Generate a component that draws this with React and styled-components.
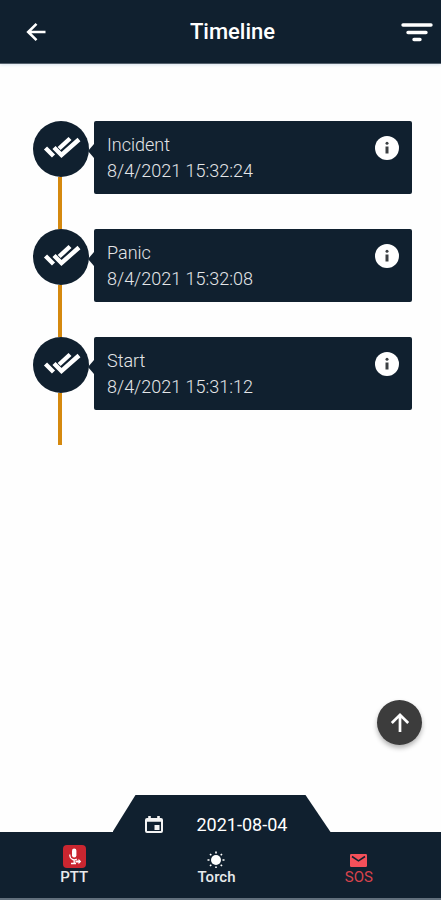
import React from "react";
import styled, { createGlobalStyle } from "styled-components";

const navy = "#10202f";

const GlobalStyle = createGlobalStyle`
  *, *::before, *::after { box-sizing: border-box; }
  body { margin: 0; background: #fefefe; font-family: Roboto, "Liberation Sans", sans-serif; }
  button { font: inherit; color: inherit; background: none; border: 0; padding: 0; cursor: pointer; }
  svg { display: block; }
  h1, h2, p, ol { margin: 0; padding: 0; }
`;

const Screen = styled.div`
  position: relative;
  display: flex;
  flex-direction: column;
  min-height: 100vh;
`;

const Header = styled.header`
  display: grid;
  grid-template-columns: 72px 1fr 48px;
  align-items: center;
  height: 64px;
  background: ${navy};
  color: #fff;
  border-bottom: 1px solid #56626e;
  box-shadow: 0 1px 3px #dbe4ee;
`;

const HeaderButton = styled.button`
  display: flex;
  align-items: center;
  justify-content: center;
  height: 48px;
`;

const Title = styled.h1`
  text-align: center;
  font-size: 22px;
  line-height: 28px;
  font-weight: 500;
`;

const Main = styled.main`
  flex: 1;
  padding: 57px 29px 0 33px;
`;

const Timeline = styled.ol`
  list-style: none;
`;

const Entry = styled.li`
  display: grid;
  grid-template-columns: 56px 1fr;
  column-gap: 5px;
  align-items: start;
  min-height: 108px;
`;

const Rail = styled.div`
  display: flex;
  flex-direction: column;
  align-items: center;
  align-self: stretch;
`;

const Marker = styled.div`
  width: 56px;
  height: 56px;
  border-radius: 50%;
  background: ${navy};
`;

const Line = styled.div`
  flex: 1;
  width: 4px;
  margin-right: 2px;
  background: #d5890f;
`;

const Card = styled.article`
  position: relative;
  display: flex;
  justify-content: space-between;
  align-items: flex-start;
  padding: 11px 13px 10px;
  border-radius: 2px;
  background: ${navy};
  color: #e4e6e8;

  &::before {
    content: "";
    position: absolute;
    top: 23px;
    left: -6px;
    border: 7px solid transparent;
    border-left-width: 0;
    border-right: 6px solid ${navy};
  }
`;

const CardTitle = styled.h2`
  font-size: 18px;
  line-height: 26px;
  font-weight: 300;
`;

const CardTime = styled.p`
  font-size: 18px;
  line-height: 26px;
  font-weight: 300;
`;

const InfoButton = styled.button`
  margin-top: 4px;
  height: 24px;
`;

const ScrollTop = styled.button`
  position: absolute;
  right: 19px;
  bottom: 155px;
  display: flex;
  align-items: center;
  justify-content: center;
  width: 45px;
  height: 45px;
  border-radius: 50%;
  background: #3c3c3c;
  box-shadow: 0 3px 5px rgba(0, 0, 0, 0.3);
`;

const Footer = styled.footer`
  display: flex;
  flex-direction: column;
`;

const DateButton = styled.button`
  display: flex;
  align-items: center;
  align-self: center;
  gap: 34px;
  width: 218px;
  height: 41px;
  padding: 19px 0 0 32px;
  margin-left: 2px;
  margin-bottom: -4px;
  background: ${navy};
  color: #fff;
  clip-path: polygon(23px 0, 193px 0, 218px 37px, 218px 41px, 0 41px, 0 37px);
`;

const DateText = styled.span`
  font-size: 18px;
  line-height: 20px;
`;

const Nav = styled.nav`
  display: grid;
  grid-template-columns: repeat(3, 1fr);
  height: 68px;
  padding: 12px 11px 0 3px;
  background: ${navy};
  border-bottom: 2px solid #62707d;
`;

const NavButton = styled.button`
  display: flex;
  flex-direction: column;
  align-items: center;
  height: 42px;
  color: ${(p) => p.$color};
`;

const NavIcon = styled.span`
  display: flex;
  align-items: ${(p) => (p.$low ? "flex-end" : "center")};
  justify-content: center;
  height: 24px;
`;

const NavLabel = styled.span`
  font-size: 15px;
  line-height: 18px;
  font-weight: ${(p) => (p.$regular ? 400 : 500)};
`;

const BackIcon = () => (
  <svg width="20" height="20" viewBox="0 0 20 20" fill="none" stroke="#fff" strokeWidth="2.6">
    <path d="M19.5 10H2.5M10.5 1.8 2.2 10l8.3 8.2" />
  </svg>
);

const FilterIcon = () => (
  <svg width="34" height="22" viewBox="0 0 34 22" fill="none" stroke="#fff" strokeWidth="3.4" strokeLinecap="round">
    <path d="M3 4h28M8 11.5h18M14 18.5h6" />
  </svg>
);

const DoubleCheckIcon = () => (
  <svg width="56" height="56" viewBox="0 0 56 56" fill="none" strokeWidth="4.4">
    <path d="M12.5 27l8 8M25 28.5l12-11" stroke="#fff" />
    <path d="M21 26.5l7.5 7.5 17.5-15.5" stroke={navy} strokeWidth="6" />
    <path d="M21 26.5l7.5 7.5 17.5-15.5" stroke="#fff" />
  </svg>
);

const InfoIcon = () => (
  <svg width="24" height="24" viewBox="0 0 24 24">
    <circle cx="12" cy="12" r="12" fill="#fff" />
    <circle cx="12" cy="7.3" r="1.5" fill="#3c4043" />
    <path d="M12 10.5v7" stroke="#3c4043" strokeWidth="3" />
  </svg>
);

const UpIcon = () => (
  <svg width="22" height="22" viewBox="0 0 22 22" fill="none" stroke="#fff" strokeWidth="2.7">
    <path d="M11 20V3M2.8 11 11 2.8l8.2 8.2" />
  </svg>
);

const CalendarIcon = () => (
  <svg width="18" height="18" viewBox="0 0 18 18" fill="none" stroke="#f4f4f4" strokeWidth="2">
    <rect x="1" y="3" width="16" height="13" rx="1" />
    <path d="M1 4.5h16M4.5 0v4M13.5 0v4" strokeWidth="2.6" />
    <path d="M9.5 9h5v5h-5z" fill="#f4f4f4" stroke="none" />
  </svg>
);

const MicIcon = () => (
  <svg width="23" height="23" viewBox="0 0 23 23" fill="none" stroke="#fff">
    <rect width="23" height="23" rx="4" fill="#ca2630" stroke="none" />
    <rect x="9" y="3.5" width="4.4" height="9" rx="2.2" fill="#fff" stroke="none" />
    <path d="M6.8 9.5v1.3a4.4 4.4 0 0 0 7 3.2M11.2 15v3M8 18.5h5" strokeWidth="1.3" />
    <path d="M12.5 15.5h3v-1.7l2.7 2.7-2.7 2.7v-1.6h-3z" fill="#fff" stroke="none" />
  </svg>
);

const SunIcon = () => (
  <svg width="18" height="18" viewBox="0 0 18 18" fill="none" stroke="#fff">
    <circle cx="9" cy="10" r="5" fill="#fff" stroke="none" />
    <path
      d="M9 1.5v2M9 16.5v1.5M.5 10h2M15.5 10h2M3 4l1.3 1.3M13.7 14.7 15 16M3 16l1.3-1.3M13.7 5.3 15 4"
      strokeWidth="1.6"
    />
  </svg>
);

const MailIcon = () => (
  <svg width="17" height="16" viewBox="0 0 17 16" fill="none">
    <rect width="17" height="13" y="2" rx="1.2" fill="#f4505a" />
    <path d="M2 4.5l6.5 4.3L15 4.5" stroke={navy} strokeWidth="1.5" />
  </svg>
);

const entries = [
  { title: "Incident", time: "8/4/2021 15:32:24" },
  { title: "Panic", time: "8/4/2021 15:32:08" },
  { title: "Start", time: "8/4/2021 15:31:12" },
];

export default function App() {
  return (
    <>
      <GlobalStyle />
      <Screen>
        <Header>
          <HeaderButton aria-label="Back"><BackIcon /></HeaderButton>
          <Title>Timeline</Title>
          <HeaderButton aria-label="Filter"><FilterIcon /></HeaderButton>
        </Header>
        <Main>
          <Timeline>
            {entries.map((entry) => (
              <Entry key={entry.title}>
                <Rail>
                  <Marker><DoubleCheckIcon /></Marker>
                  <Line />
                </Rail>
                <Card>
                  <div>
                    <CardTitle>{entry.title}</CardTitle>
                    <CardTime>{entry.time}</CardTime>
                  </div>
                  <InfoButton aria-label={`About ${entry.title}`}><InfoIcon /></InfoButton>
                </Card>
              </Entry>
            ))}
          </Timeline>
        </Main>
        <ScrollTop aria-label="Scroll to top"><UpIcon /></ScrollTop>
        <Footer>
          <DateButton>
            <CalendarIcon />
            <DateText>2021-08-04</DateText>
          </DateButton>
          <Nav>
            <NavButton $color="#e8eaec">
              <NavIcon><MicIcon /></NavIcon>
              <NavLabel>PTT</NavLabel>
            </NavButton>
            <NavButton $color="#e8eaec">
              <NavIcon $low><SunIcon /></NavIcon>
              <NavLabel>Torch</NavLabel>
            </NavButton>
            <NavButton $color="#d8434c">
              <NavIcon $low><MailIcon /></NavIcon>
              <NavLabel $regular>SOS</NavLabel>
            </NavButton>
          </Nav>
        </Footer>
      </Screen>
    </>
  );
}
